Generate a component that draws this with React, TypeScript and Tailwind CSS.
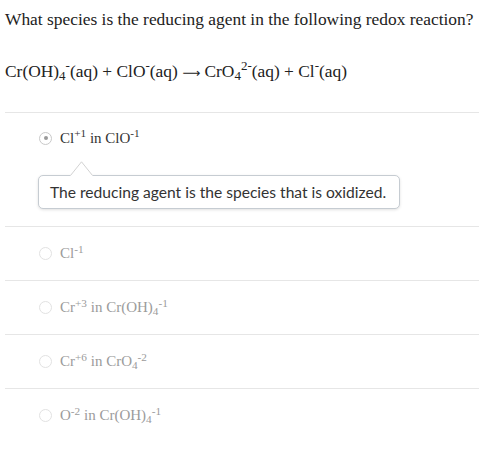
import React from "react";

type Option = {
    id: string;
    label: React.ReactNode;
};

const serif = { fontFamily: '"Liberation Serif", "Times New Roman", serif' };

const options: Option[] = [
    { id: "a", label: <>Cl<sup>+1</sup> in ClO<sup>-1</sup></> },
    { id: "b", label: <>Cl<sup>-1</sup></> },
    { id: "c", label: <>Cr<sup>+3</sup> in Cr(OH)<sub>4</sub><sup>-1</sup></> },
    { id: "d", label: <>Cr<sup>+6</sup> in CrO<sub>4</sub><sup>-2</sup></> },
    { id: "e", label: <>O<sup>-2</sup> in Cr(OH)<sub>4</sub><sup>-1</sup></> },
];

function Radio({ selected }: { selected: boolean }) {
    return (
        <span className={`flex h-[13px] w-[13px] shrink-0 items-center justify-center rounded-full border ${selected ? "border-[#c9c9c9]" : "border-[#e2e2e2]"}`}>
            {selected && <span className="h-[4px] w-[4px] rounded-full bg-[#9a9a9a]" />}
        </span>
    );
}

function Hint({ text }: { text: string }) {
    return (
        <div className="relative ml-[33px] mt-[12px] mb-[17px] w-[362px]">
            {/* caret */}
            <svg className="absolute left-[32px] -top-[14px]" width="23" height="15" viewBox="0 0 23 15">
                <polygon points="0,15 11.5,0.5 23,15" fill="#fff" />
                <polyline points="0.5,14.5 11.5,0.8 22.5,14.5" fill="none" stroke="#d2d2d2" strokeWidth="1" />
            </svg>
            <div
                className="rounded-[5px] border border-[#c6ccd2] bg-white px-[11px] py-[7px] text-[15.6px] leading-[18px] text-[#333] shadow-[0_1px_3px_rgba(0,0,0,0.12)]"
                style={{ fontFamily: 'Lato, "Noto Sans", sans-serif' }}
            >
                {text}
            </div>
        </div>
    );
}

export default function App() {
    const selected = "a";

    return (
        <div className="w-[479px] h-[454px] bg-white overflow-hidden" style={serif}>
            <div className="pl-[5px] pt-[8px] text-[17.4px] leading-[22px] text-[#222]">
                <p>What species is the reducing agent in the following redox reaction?</p>
                <p className="mt-[30px]">
                    Cr(OH)<sub>4</sub><sup>-</sup>(aq) + ClO<sup>-</sup>(aq){" "}
                    <span className="text-[12.5px]" style={{ fontFamily: '"DejaVu Sans", sans-serif' }}>⟶</span>{" "}
                    CrO<sub>4</sub><sup>2-</sup>(aq) + Cl<sup>-</sup>(aq)
                </p>
            </div>

            <div className="ml-[5px] mt-[28px]">
                {options.map((opt) => (
                    <div key={opt.id} className="border-t border-[#e6e6e6]">
                        <div className={`flex items-center gap-[8px] pl-[34px] ${opt.id === selected ? "h-[50px]" : "h-[53px]"}`}>
                            <Radio selected={opt.id === selected} />
                            <span className={`text-[15px] ${opt.id === selected ? "text-[#333]" : "text-[#9b9b9b]"}`}>{opt.label}</span>
                        </div>
                        {opt.id === selected && <Hint text="The reducing agent is the species that is oxidized." />}
                    </div>
                ))}
            </div>
        </div>
    );
}
